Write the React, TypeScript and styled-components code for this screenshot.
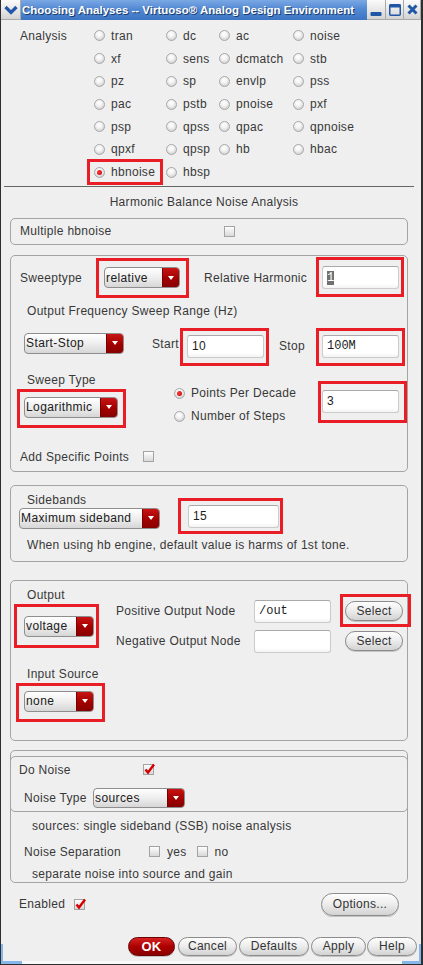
import React from "react";
import styled, { createGlobalStyle, css } from "styled-components";

const RED = "#e81d25";
const FRAME = "#a4a4a4";
const WM_BLUE = "#1f56a6";

const GlobalStyle = createGlobalStyle`
  html, body { margin: 0; padding: 0; background: #efefef; }
`;

type Inset = [number, number, number, number];

const Window = styled.div`
  width: 423px;
  height: 965px;
  box-sizing: border-box;
  display: flex;
  flex-direction: column;
  background: #efefef;
  border-left: 1px solid #2e2e2e;
  border-right: 2px solid #2e2e2e;
  border-bottom: 1px solid #2e2e2e;
  font-family: "Liberation Sans", Arial, sans-serif;
  font-size: 12px;
  letter-spacing: 0.3px;
  color: #383838;
  overflow: hidden;
`;

const TitleBar = styled.div`
  height: 20px;
  display: flex;
  flex-shrink: 0;
`;

const WmButton = styled.div<{ $w: number }>`
  width: ${(p) => p.$w}px;
  height: 20px;
  box-sizing: border-box;
  display: flex;
  align-items: center;
  justify-content: center;
  background: linear-gradient(#fbfbfb, #e4e4e4 60%, #d3d3d3);
  border-right: 1px solid #a9a9a9;
  border-bottom: 1px solid #a9a9a9;
  flex-shrink: 0;
`;

const TitleText = styled.div`
  flex: 1;
  height: 20px;
  display: flex;
  align-items: center;
  padding-left: 1px;
  background: linear-gradient(#7ba8e4, #5289d3 45%, #3e75c3);
  color: #fff;
  font-weight: bold;
  font-size: 11.5px;
  letter-spacing: 0;
  text-shadow: 1px 1px 0 #1b3b6a;
  white-space: nowrap;
  overflow: hidden;
`;

const Content = styled.div`
  display: flex;
  flex-direction: column;
  width: 398px;
  padding-left: 9px;
`;

const AnalysisGrid = styled.div`
  display: grid;
  grid-template-columns: 74px 72px 53px 74px 1fr;
  grid-auto-rows: 22.7px;
  align-items: center;
  padding: 4.6px 0 0 10px;
`;

const Separator = styled.div`
  margin: 2.5px 0 0 -6px;
  width: 410px;
  height: 1px;
  background: #666;
  flex-shrink: 0;
`;

const Heading = styled.div`
  height: 31px;
  width: 388px;
  display: flex;
  align-items: center;
  justify-content: center;
  flex-shrink: 0;
`;

const Frame = styled.div<{ $h: number; $mt: number }>`
  box-sizing: border-box;
  width: 398px;
  height: ${(p) => p.$h}px;
  margin-top: ${(p) => p.$mt}px;
  border: 1px solid ${FRAME};
  border-radius: 5px;
  display: flex;
  flex-direction: column;
  flex-shrink: 0;
`;

const SubFrame = styled(Frame)`
  margin-left: -1px;
`;

const Row = styled.div<{ $pl?: number; $pr?: number; $mt?: number; $h?: number; $align?: string }>`
  display: flex;
  align-items: ${(p) => p.$align ?? "center"};
  padding-left: ${(p) => p.$pl ?? 0}px;
  padding-right: ${(p) => p.$pr ?? 0}px;
  margin-top: ${(p) => p.$mt ?? 0}px;
  height: ${(p) => (p.$h ? `${p.$h}px` : "auto")};
  flex-shrink: 0;
`;

const Col = styled.div<{ $w?: number; $mt?: number }>`
  display: flex;
  flex-direction: column;
  align-items: flex-start;
  width: ${(p) => (p.$w ? `${p.$w}px` : "auto")};
  margin-top: ${(p) => p.$mt ?? 0}px;
  flex-shrink: 0;
`;

const Label = styled.div<{ $w?: number; $h?: number; $m?: string; $pl?: number }>`
  width: ${(p) => (p.$w ? `${p.$w}px` : "auto")};
  height: ${(p) => p.$h ?? 16}px;
  line-height: ${(p) => p.$h ?? 16}px;
  margin: ${(p) => p.$m ?? "0"};
  padding-left: ${(p) => p.$pl ?? 0}px;
  white-space: nowrap;
  flex-shrink: 0;
`;

const Mark = styled.div<{ $i: Inset; $m?: string }>`
  position: relative;
  display: flex;
  width: fit-content;
  flex-shrink: 0;
  justify-self: start;
  margin: ${(p) => p.$m ?? "0"};
  &::after {
    content: "";
    position: absolute;
    top: ${(p) => -p.$i[0]}px;
    right: ${(p) => -p.$i[1]}px;
    bottom: ${(p) => -p.$i[2]}px;
    left: ${(p) => -p.$i[3]}px;
    border: 3px solid ${RED};
    pointer-events: none;
  }
`;

const RadioItem = styled.div`
  display: flex;
  align-items: center;
  gap: 6px;
  height: 16px;
  white-space: nowrap;
`;

const RadioDot = styled.span<{ $on?: boolean }>`
  position: relative;
  width: 11px;
  height: 11px;
  box-sizing: border-box;
  border-radius: 50%;
  border: 1px solid #a8a8a8;
  background: radial-gradient(circle at 45% 35%, #ffffff 0, #f4f4f4 35%, #c2c2c2 100%);
  flex-shrink: 0;
  ${(p) =>
    p.$on &&
    css`
      &::after {
        content: "";
        position: absolute;
        left: 2px;
        top: 2px;
        width: 5px;
        height: 5px;
        border-radius: 50%;
        background: radial-gradient(circle at 40% 40%, #ff3a3a, #c00000);
      }
    `}
`;

const CheckBox = styled.span<{ $m?: string }>`
  position: relative;
  width: 11px;
  height: 11px;
  box-sizing: border-box;
  border: 1px solid #a3a3a3;
  background: linear-gradient(#fefefe, #d8d8d8);
  margin: ${(p) => p.$m ?? "0"};
  flex-shrink: 0;
  & > svg {
    position: absolute;
    left: -1px;
    top: -3px;
  }
`;

const SelectBox = styled.div<{ $w: number; $h: number; $m?: string }>`
  box-sizing: border-box;
  width: ${(p) => p.$w}px;
  height: ${(p) => p.$h}px;
  margin: ${(p) => p.$m ?? "0"};
  display: flex;
  border: 1px solid #8e8e8e;
  border-radius: 4px;
  overflow: hidden;
  background: linear-gradient(#ffffff, #ececec 55%, #d6d6d6);
  flex-shrink: 0;
`;

const SelectValue = styled.span`
  flex: 1;
  padding-left: 1px;
  display: flex;
  align-items: center;
  font-size: 12px;
  letter-spacing: 0.4px;
  color: #202020;
  white-space: nowrap;
`;

const SelectArrow = styled.span`
  width: 16px;
  display: flex;
  align-items: center;
  justify-content: center;
  background: linear-gradient(#c81414, #a20000 55%, #870000);
  border-left: 1px solid #7a0000;
  &::after {
    content: "";
    border-left: 3.5px solid transparent;
    border-right: 3.5px solid transparent;
    border-top: 4px solid #fff;
  }
`;

const Field = styled.div<{ $w: number; $mono?: boolean; $m?: string }>`
  box-sizing: border-box;
  width: ${(p) => p.$w}px;
  height: 23px;
  margin: ${(p) => p.$m ?? "0"};
  display: flex;
  align-items: center;
  padding-left: 4px;
  background: linear-gradient(#ffffff 80%, #f3f3f3);
  border: 1px solid #cbcbcb;
  border-top-color: #a9a9a9;
  border-radius: 3px;
  font-family: ${(p) => (p.$mono ? `"Liberation Mono", monospace` : "inherit")};
  letter-spacing: ${(p) => (p.$mono ? "0" : "0.3px")};
  font-size: 12px;
  color: #1c1c1c;
  flex-shrink: 0;
`;

const Selected = styled.span`
  background: #707070;
  color: #fff;
`;

const PillButton = styled.button<{ $w: number; $h: number; $primary?: boolean; $m?: string }>`
  box-sizing: border-box;
  width: ${(p) => p.$w}px;
  height: ${(p) => p.$h}px;
  margin: ${(p) => p.$m ?? "0"};
  padding: 0;
  border: 1px solid #8c8c8c;
  border-radius: ${(p) => p.$h / 2}px;
  background: linear-gradient(#fdfdfd, #ececec 50%, #d2d2d2);
  box-shadow: 0 1px 0 #c4c4c4;
  font-family: "Liberation Sans", Arial, sans-serif;
  font-size: 12px;
  letter-spacing: 0.3px;
  color: #333;
  flex-shrink: 0;
  ${(p) =>
    p.$primary &&
    css`
      background: linear-gradient(#d62222, #ac0000 50%, #8a0000);
      border-color: #6a0000;
      color: #fff;
      font-weight: bold;
      font-size: 13px;
    `}
`;

const ButtonBar = styled.div`
  display: flex;
  justify-content: flex-end;
  gap: 2px;
  margin-top: 21px;
  padding-right: 4px;
  height: 19px;
  flex-shrink: 0;
`;

const BottomEdge = styled.div`
  margin-top: auto;
  height: 3px;
  display: flex;
  justify-content: space-between;
  background: #f9f9f9;
  flex-shrink: 0;
`;

const Corner = styled.div<{ $side: "left" | "right"; $w: number }>`
  position: relative;
  width: ${(p) => p.$w}px;
  background: #86b6ec;
  &::before {
    content: "";
    position: absolute;
    bottom: 0;
    ${(p) => p.$side}: 0;
    width: 2px;
    height: 20px;
    background: #86b6ec;
  }
`;

const analysisRows = [
  ["tran", "dc", "ac", "noise"],
  ["xf", "sens", "dcmatch", "stb"],
  ["pz", "sp", "envlp", "pss"],
  ["pac", "pstb", "pnoise", "pxf"],
  ["psp", "qpss", "qpac", "qpnoise"],
  ["qpxf", "qpsp", "hb", "hbac"],
  ["hbnoise", "hbsp"],
];

function Radio({ label, on }: { label: string; on?: boolean }) {
  return (
    <RadioItem>
      <RadioDot $on={on} />
      {label}
    </RadioItem>
  );
}

function Check({ on, m }: { on?: boolean; m?: string }) {
  return (
    <CheckBox $m={m}>
      {on && (
        <svg width="13" height="13" viewBox="0 0 13 13">
          <path d="M2.5 7.5 L5 10.5 L11 2.5" fill="none" stroke="#d40000" strokeWidth="2.4" />
        </svg>
      )}
    </CheckBox>
  );
}

function Dropdown({ value, w, h = 21, m }: { value: string; w: number; h?: number; m?: string }) {
  return (
    <SelectBox $w={w} $h={h} $m={m}>
      <SelectValue>{value}</SelectValue>
      <SelectArrow />
    </SelectBox>
  );
}

export default function App() {
  return (
    <>
      <GlobalStyle />
      <Window>
        <TitleBar>
          <WmButton $w={20}>
            <svg width="14" height="10" viewBox="0 0 14 10">
              <path d="M1.5 2 L7 7.5 L12.5 2" fill="none" stroke={WM_BLUE} strokeWidth="3.2" />
            </svg>
          </WmButton>
          <TitleText>Choosing Analyses -- Virtuoso® Analog Design Environment</TitleText>
          <WmButton $w={19}>
            <svg width="12" height="14" viewBox="0 0 12 14">
              <rect x="0.5" y="9" width="11" height="4" rx="1" fill={WM_BLUE} />
            </svg>
          </WmButton>
          <WmButton $w={18}>
            <svg width="12" height="12" viewBox="0 0 12 12">
              <rect x="0.75" y="0.75" width="10.5" height="10.5" rx="1" fill="none" stroke={WM_BLUE} strokeWidth="1.5" />
              <rect x="0.5" y="0.5" width="11" height="3" fill={WM_BLUE} />
            </svg>
          </WmButton>
          <WmButton $w={17}>
            <svg width="11" height="11" viewBox="0 0 11 11">
              <path d="M1.5 1.5 L9.5 9.5 M9.5 1.5 L1.5 9.5" stroke={WM_BLUE} strokeWidth="3" />
            </svg>
          </WmButton>
        </TitleBar>

        <Content>
          <AnalysisGrid>
            {analysisRows.map((row, r) => (
              <React.Fragment key={r}>
                <Label>{r === 0 ? "Analysis" : ""}</Label>
                {row.map((name) =>
                  name === "hbnoise" ? (
                    <Mark key={name} $i={[5, 8, 5, 7]}>
                      <Radio label={name} on />
                    </Mark>
                  ) : (
                    <Radio key={name} label={name} />
                  )
                )}
              </React.Fragment>
            ))}
          </AnalysisGrid>
          <Separator />
          <Heading>Harmonic Balance Noise Analysis</Heading>

          <Frame $h={27} $mt={0}>
            <Row $pl={9} $h={25}>
              <Label $w={204}>Multiple hbnoise</Label>
              <Check />
            </Row>
          </Frame>

          <Frame $h={217} $mt={10}>
            <Row $pl={9} $mt={10} $h={24}>
              <Label $w={84}>Sweeptype</Label>
              <Mark $i={[9, 9, 10, 8]}>
                <Dropdown value="relative" w={76} />
              </Mark>
              <Label $w={118} $m="0 0 0 24px">
                Relative Harmonic
              </Label>
              <Mark $i={[9, 5, 8, 6]}>
                <Field $w={77} $mono>
                  <Selected>1</Selected>
                </Field>
              </Mark>
            </Row>
            <Row $pl={16} $mt={13} $h={16}>
              <Label>Output Frequency Sweep Range (Hz)</Label>
            </Row>
            <Row $pl={13} $mt={14} $h={25} $align="flex-start">
              <Dropdown value="Start-Stop" w={100} />
              <Label $w={35} $h={23} $m="0 0 0 28px">
                Start
              </Label>
              <Mark $i={[7, 5, 8, 7]} $m="2px 0 0 0">
                <Field $w={77}>10</Field>
              </Mark>
              <Label $w={43} $h={23} $m="2px 0 0 15px">
                Stop
              </Label>
              <Mark $i={[7, 6, 8, 6]} $m="2px 0 0 0">
                <Field $w={77} $mono>
                  100M
                </Field>
              </Mark>
            </Row>
            <Row $pl={13} $mt={14} $align="flex-start">
              <Col $w={150}>
                <Label $pl={3}>Sweep Type</Label>
                <Mark $i={[8, 8, 10, 7]} $m="9px 0 0 0">
                  <Dropdown value="Logarithmic" w={94} />
                </Mark>
              </Col>
              <Col $w={148} $mt={10}>
                <Row $h={23}>
                  <Radio label="Points Per Decade" on />
                </Row>
                <Row $h={23}>
                  <Radio label="Number of Steps" />
                </Row>
              </Col>
              <Mark $i={[9, 8, 10, 4]} $m="18px 0 0 0">
                <Field $w={77}>3</Field>
              </Mark>
            </Row>
            <Row $pl={9} $mt={21} $h={16}>
              <Label $w={123}>Add Specific Points</Label>
              <Check />
            </Row>
          </Frame>

          <Frame $h={77} $mt={13}>
            <Row $pl={8} $align="flex-start">
              <Col $w={169} $mt={6}>
                <Label $pl={8}>Sidebands</Label>
                <Dropdown value="Maximum sideband" w={141} />
              </Col>
              <Mark $i={[7, 4, 6, 10]} $m="19px 0 0 0">
                <Field $w={91}>15</Field>
              </Mark>
            </Row>
            <Row $pl={16} $mt={8} $h={16}>
              <Label>When using hb engine, default value is harms of 1st tone.</Label>
            </Row>
          </Frame>

          <Frame $h={161} $mt={18}>
            <Row $pl={13} $align="flex-start">
              <Col $w={92} $mt={6}>
                <Label $pl={3}>Output</Label>
                <Mark $i={[12, 5, 11, 10]} $m="13px 0 0 0">
                  <Dropdown value="voltage" w={70} />
                </Mark>
                <Label $pl={3} $m="29px 0 0 0">
                  Input Source
                </Label>
                <Mark $i={[8, 11, 10, 8]} $m="9px 0 0 0">
                  <Dropdown value="none" w={70} />
                </Mark>
              </Col>
              <Col $mt={19}>
                <Row $h={23}>
                  <Label $w={138}>Positive Output Node</Label>
                  <Field $w={77} $mono>
                    /out
                  </Field>
                  <Mark $i={[7, 8, 6, 5]} $m="0 0 0 14px">
                    <PillButton $w={58} $h={20}>
                      Select
                    </PillButton>
                  </Mark>
                </Row>
                <Row $h={23} $mt={7}>
                  <Label $w={138}>Negative Output Node</Label>
                  <Field $w={77} />
                  <PillButton $w={58} $h={20} $m="0 0 0 14px">
                    Select
                  </PillButton>
                </Row>
              </Col>
            </Row>
          </Frame>

          <Frame $h={133} $mt={9}>
            <SubFrame $h={56} $mt={5}>
              <Row $pl={8} $mt={5} $h={16}>
                <Label $w={124}>Do Noise</Label>
                <Check on />
              </Row>
              <Row $pl={13} $mt={10} $h={21}>
                <Label $w={69}>Noise Type</Label>
                <Dropdown value="sources" w={92} h={20} />
              </Row>
            </SubFrame>
            <Row $pl={21} $mt={6} $h={16}>
              <Label>sources: single sideband (SSB) noise analysis</Label>
            </Row>
            <Row $pl={13} $mt={10} $h={16}>
              <Label $w={125}>Noise Separation</Label>
              <Check />
              <Label $m="0 0 0 7px">yes</Label>
              <Check m="0 0 0 10px" />
              <Label $m="0 0 0 7px">no</Label>
            </Row>
            <Row $pl={21} $mt={6} $h={16}>
              <Label>separate noise into source and gain</Label>
            </Row>
          </Frame>

          <Row $pl={9} $pr={9} $mt={10} $h={23}>
            <Label $w={55}>Enabled</Label>
            <Check on />
            <PillButton $w={78} $h={23} $m="0 0 0 auto">
              Options...
            </PillButton>
          </Row>
        </Content>

        <ButtonBar>
          <PillButton $w={47} $h={19} $primary>
            OK
          </PillButton>
          <PillButton $w={59} $h={19} $m="0 0 0 1px">
            Cancel
          </PillButton>
          <PillButton $w={70} $h={19}>
            Defaults
          </PillButton>
          <PillButton $w={55} $h={19}>
            Apply
          </PillButton>
          <PillButton $w={50} $h={19} $m="0 0 0 -1px">
            Help
          </PillButton>
        </ButtonBar>
        <BottomEdge>
          <Corner $side="left" $w={21} />
          <Corner $side="right" $w={19} />
        </BottomEdge>
      </Window>
    </>
  );
}
